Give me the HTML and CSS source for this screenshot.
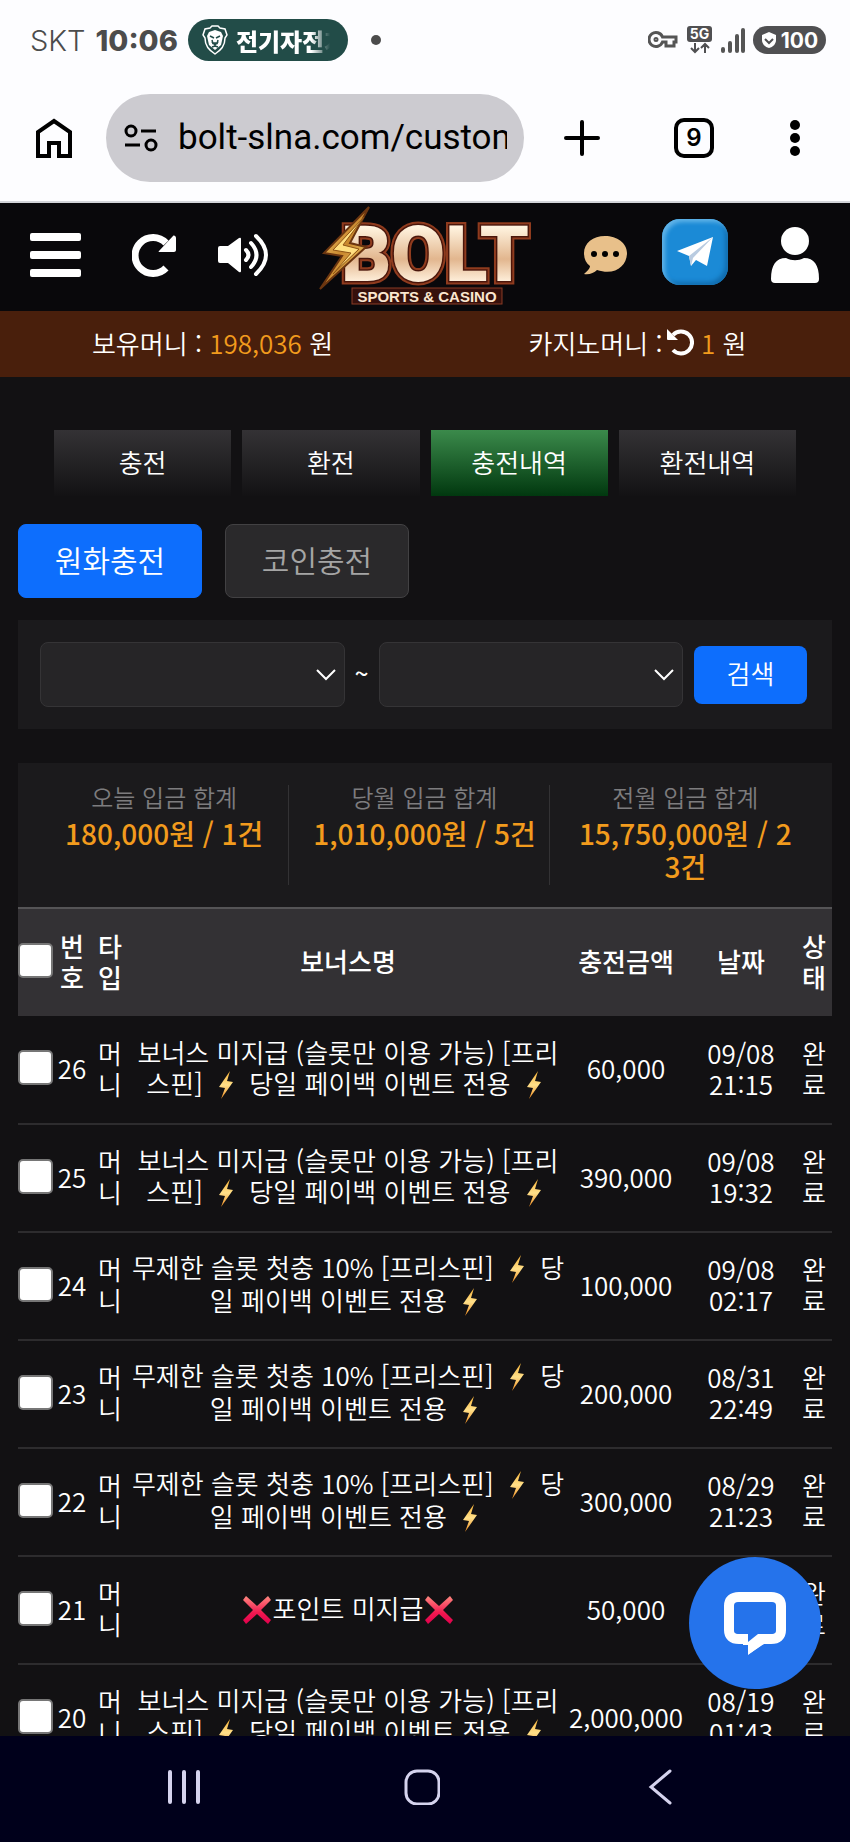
FILE: index.html
```
<!DOCTYPE html>
<html lang="ko">
<head>
  <meta charset="UTF-8" />
  <meta name="viewport" content="width=device-width, initial-scale=1.0"/>
  <title>BOLT - 충전내역</title>
  <link rel="stylesheet" href="styles.css">
</head>

<body>
  <!-- Shared icons -->
  <svg class="sprite" aria-hidden="true">
    <defs>
      <linearGradient id="bolt-fill" x1="0" y1="0" x2="0" y2="1">
        <stop offset="0" stop-color="#f9b233"/>
        <stop offset="0.5" stop-color="#ffe08a"/>
        <stop offset="1" stop-color="#f08a1c"/>
      </linearGradient>
      <linearGradient id="cross-fill" x1="0" y1="0" x2="0" y2="1">
        <stop offset="0" stop-color="#ff8a80"/>
        <stop offset="0.6" stop-color="#f0184f"/>
        <stop offset="1" stop-color="#e0004d"/>
      </linearGradient>
    </defs>
    <symbol id="icon-bolt" viewBox="0 0 32 30">
      <path d="M20 1 9 17l6 1-4 11 12-17-6-1z" fill="url(#bolt-fill)"/>
    </symbol>
    <symbol id="icon-cross" viewBox="0 0 32 30">
      <path d="M5 1 16 11 27 1 30 5 20 15 30 25 27 29 16 19 5 29 2 25 12 15 2 5z" fill="url(#cross-fill)"/>
    </symbol>
    <symbol id="icon-chevron" viewBox="0 0 20 12">
      <path d="M1 1l9 9 9-9" fill="none" stroke="#fff" stroke-width="2"/>
    </symbol>
  </svg>

  <div class="phone">
    <!-- Status bar -->
    <div class="status-bar">
      <span class="carrier">SKT</span>
      <span class="time">10:06</span>
      <div class="notice">
        <svg width="26" height="30" viewBox="0 0 26 30" fill="none" stroke="#fff" stroke-width="2">
          <path d="M8 3 10 1h6l2 2 5 1 2 6-2 3c0 8-4 12-10 16C7 25 3 21 3 13l-2-3 2-6z" stroke-width="1.500"/>
          <path d="M7 7 13 5l6 2 2 4-2 9-6 5-6-5-2-9z" fill="#fff" stroke="none"/>
          <path d="M8 11l4 2M18 11l-4 2M10 15l1 4M16 15l-1 4M11 18h4l-2 2zM10 22l3-1 3 1" stroke="#224c48" stroke-width="1.500"/>
        </svg>
        <span class="notice-text">전기자전거</span>
      </div>
      <span class="dot"></span>
      <div class="status-icons">
        <svg width="30" height="20" viewBox="0 0 30 20" fill="none" stroke="#555" stroke-width="3">
          <path d="M14.500 7A7 7 0 1 0 14.500 12H18V16H26V12H28V7z"/>
          <circle cx="8" cy="9.500" r="1.500" stroke-width="2"/>
        </svg>
        <svg class="net" width="26" height="28" viewBox="0 0 26 28">
          <rect width="25" height="16" rx="3" fill="#505052"/>
          <text x="12.500" y="13" text-anchor="middle" class="net-text">5G</text>
          <path d="M8 17v9M4 22l4 4 4-4M18 27v-8M14 22l4-4 4 4" fill="none" stroke="#505052" stroke-width="2"/>
        </svg>
        <svg width="26" height="27" viewBox="0 0 26 27" stroke="#555" stroke-width="4" stroke-linecap="round">
          <path d="M3 22v2M10 16v8M17 9v15M23 3v21" />
        </svg>
        <div class="battery">
          <svg width="16" height="18" viewBox="0 0 16 18">
            <path d="M8 1l7 3v5c0 4-3 7-7 8-4-1-7-4-7-8V4z" fill="#fff"/>
            <path d="M4 8l4 4 4-4" fill="none" stroke="#505052" stroke-width="2"/>
          </svg>
          <span>100</span>
        </div>
      </div>
    </div>

    <!-- Browser toolbar -->
    <div class="toolbar">
      <button class="icon-btn" aria-label="홈">
        <svg width="36" height="40" viewBox="0 0 36 40" fill="none" stroke="#000" stroke-width="4">
          <path d="M2 38V14L18 3l16 11v24H23V25H13v13z"/>
        </svg>
      </button>
      <div class="address">
        <svg width="34" height="28" viewBox="0 0 34 28" fill="none" stroke="#000" stroke-width="3">
          <circle cx="7" cy="7" r="5"/>
          <path d="M17 7h15M1 21h15"/>
          <circle cx="27" cy="21" r="5"/>
        </svg>
        <input class="url" type="text" value="bolt-slna.com/customer" aria-label="주소">
      </div>
      <div class="toolbar-actions">
        <button class="icon-btn" aria-label="새 탭">
          <svg width="36" height="36" viewBox="0 0 36 36" stroke="#000" stroke-width="4" stroke-linecap="round">
            <path d="M18 2v32M2 18h32"/>
          </svg>
        </button>
        <button class="tab-count">9</button>
        <button class="icon-btn" aria-label="메뉴">
          <svg width="14" height="38" viewBox="0 0 14 38">
            <circle cx="7" cy="6" r="5"/><circle cx="7" cy="19" r="5"/><circle cx="7" cy="32" r="5"/>
          </svg>
        </button>
      </div>
    </div>

    <!-- Site -->
    <div class="site">
      <header class="site-header">
        <div class="header-left">
          <button class="icon-btn" aria-label="전체 메뉴">
            <svg width="52" height="46" viewBox="0 0 52 46" fill="#fff">
              <rect y="1" width="51" height="8" rx="2"/><rect y="19" width="51" height="8" rx="2"/><rect y="37" width="51" height="8" rx="2"/>
            </svg>
          </button>
          <button class="icon-btn" aria-label="새로고침">
            <svg width="44" height="44" viewBox="0 0 44 44">
              <path d="M34 35A18 18 0 1 1 34 10" fill="none" stroke="#fff" stroke-width="7"/>
              <path d="M27 18 41 3c1-1 3 0 3 2v12c0 1-1 2-2 2H28c-1 0-2 0-1-1z" fill="#fff"/>
            </svg>
          </button>
          <button class="icon-btn" aria-label="소리">
            <svg width="52" height="44" viewBox="0 0 52 44">
              <path d="M2 13h8L21 5q2-1 2 1v32q0 2-2 1L10 30H2q-2 0-2-2V15q0-2 2-2z" fill="#fff"/>
              <path d="M28 17q5 5 0 10M33 10q11 12 0 24M38 3q20 19 0 38" fill="none" stroke="#fff" stroke-width="4" stroke-linecap="round"/>
            </svg>
          </button>
        </div>

        <a href="#" class="logo" aria-label="BOLT SPORTS &amp; CASINO">
          <svg width="212" height="100" viewBox="0 0 212 100">
            <defs>
              <linearGradient id="logo-text" x1="0" y1="0" x2="0" y2="1">
                <stop offset="0.200" stop-color="#fff3df"/>
                <stop offset="0.550" stop-color="#e2b68e"/>
                <stop offset="0.800" stop-color="#fff0dc"/>
              </linearGradient>
              <linearGradient id="logo-bolt" x1="0" y1="0" x2="1" y2="1">
                <stop offset="0" stop-color="#f9d47a"/>
                <stop offset="0.500" stop-color="#c9882e"/>
                <stop offset="1" stop-color="#ffe27d"/>
              </linearGradient>
            </defs>
            <text x="22" y="76" class="logo-word logo-edge">BOLT</text>
            <text x="22" y="76" class="logo-word logo-rim">BOLT</text>
            <text x="22" y="76" class="logo-word" fill="url(#logo-text)">BOLT</text>
            <path d="M50 2 5 48l18 3L1 84 47 42 31 38z" fill="url(#logo-bolt)" stroke="#6b3510" stroke-width="2"/>
            <path d="M45 12 14 45l18 3L14 69 40 44 24 40z" fill="#ffdf80" stroke="#8e5315" stroke-width="1"/>
            <rect x="33" y="83" width="150" height="16" fill="#36100c" stroke="#8a3a24"/>
            <text x="108" y="97" text-anchor="middle" class="logo-tag">SPORTS &amp; CASINO</text>
          </svg>
        </a>

        <div class="header-right">
          <button class="icon-btn" aria-label="문의">
            <svg width="45" height="40" viewBox="0 0 45 40">
              <path d="M22 1C10 1 1 8 1 18c0 6 2 10 6 13 0 3-3 5-6 8 5 1 10-1 13-4 18 6 30-4 30-17C44 8 34 1 22 1z" fill="#e8c08a"/>
              <circle cx="11" cy="19" r="3"/><circle cx="22" cy="19" r="3"/><circle cx="33" cy="19" r="3"/>
            </svg>
          </button>
          <a href="#" class="telegram" aria-label="텔레그램">
            <svg width="36" height="31" viewBox="0 0 36 31">
              <path d="M0 14 36 0 30 29 19 23 14 29 12 19z" fill="#fff"/>
              <path d="M12 19 36 0 16 21 14 29z" fill="#b9cbe0"/>
            </svg>
          </a>
          <button class="icon-btn user" aria-label="내 정보">
            <svg width="50" height="58" viewBox="0 0 50 58" fill="#fff">
              <circle cx="25" cy="15" r="14"/>
              <path d="M5 57q-4 0-4-4c0-14 5-21 15-21 6 3 12 3 18 0 10 0 15 7 15 21q0 4-4 4z"/>
            </svg>
          </button>
        </div>
      </header>

      <div class="balance">
        <p>보유머니 : <span class="money">198,036</span> 원</p>
        <p>카지노머니 :
          <svg width="28" height="28" viewBox="0 0 28 28" class="undo">
            <path d="M7 22A11 11 0 1 0 7 7" fill="none" stroke="#fff" stroke-width="4"/>
            <path d="M1 1v10q0 1 1 1h10z" fill="#fff"/>
          </svg>
          <span class="money">1</span> 원</p>
      </div>

      <nav class="tabs">
        <button class="tab">충전</button>
        <button class="tab">환전</button>
        <button class="tab active">충전내역</button>
        <button class="tab">환전내역</button>
      </nav>

      <main class="content">
        <div class="charge-type">
          <button class="type-btn active">원화충전</button>
          <button class="type-btn">코인충전</button>
        </div>

        <form class="search">
          <div class="select-wrap">
            <select aria-label="시작일"><option></option></select>
            <svg width="20" height="12"><use href="#icon-chevron"/></svg>
          </div>
          <span class="tilde">~</span>
          <div class="select-wrap">
            <select aria-label="종료일"><option></option></select>
            <svg width="20" height="12"><use href="#icon-chevron"/></svg>
          </div>
          <button type="button" class="search-btn">검색</button>
        </form>

        <div class="summary">
          <div class="sum">
            <p class="sum-label">오늘 입금 합계</p>
            <p class="sum-value">180,000원 / 1건</p>
          </div>
          <div class="sum">
            <p class="sum-label">당월 입금 합계</p>
            <p class="sum-value">1,010,000원 / 5건</p>
          </div>
          <div class="sum">
            <p class="sum-label">전월 입금 합계</p>
            <p class="sum-value">15,750,000원 / 23건</p>
          </div>
        </div>

        <table class="history">
          <thead>
            <tr>
              <th class="col-check"><input type="checkbox" aria-label="전체 선택"></th>
              <th class="col-no">번호</th>
              <th class="col-type">타입</th>
              <th>보너스명</th>
              <th class="col-amount">충전금액</th>
              <th class="col-date">날짜</th>
              <th class="col-state">상태</th>
            </tr>
          </thead>
          <tbody>
            <tr>
              <td><input type="checkbox" aria-label="26"></td>
              <td>26</td>
              <td class="narrow">머니</td>
              <td>보너스 미지급 (슬롯만 이용 가능) [프리스핀] <svg class="emoji"><use href="#icon-bolt"/></svg> 당일 페이백 이벤트 전용 <svg class="emoji"><use href="#icon-bolt"/></svg></td>
              <td>60,000</td>
              <td>09/08<br>21:15</td>
              <td class="narrow">완료</td>
            </tr>
            <tr>
              <td><input type="checkbox" aria-label="25"></td>
              <td>25</td>
              <td class="narrow">머니</td>
              <td>보너스 미지급 (슬롯만 이용 가능) [프리스핀] <svg class="emoji"><use href="#icon-bolt"/></svg> 당일 페이백 이벤트 전용 <svg class="emoji"><use href="#icon-bolt"/></svg></td>
              <td>390,000</td>
              <td>09/08<br>19:32</td>
              <td class="narrow">완료</td>
            </tr>
            <tr>
              <td><input type="checkbox" aria-label="24"></td>
              <td>24</td>
              <td class="narrow">머니</td>
              <td>무제한 슬롯 첫충 10% [프리스핀] <svg class="emoji"><use href="#icon-bolt"/></svg> 당일 페이백 이벤트 전용 <svg class="emoji"><use href="#icon-bolt"/></svg></td>
              <td>100,000</td>
              <td>09/08<br>02:17</td>
              <td class="narrow">완료</td>
            </tr>
            <tr>
              <td><input type="checkbox" aria-label="23"></td>
              <td>23</td>
              <td class="narrow">머니</td>
              <td>무제한 슬롯 첫충 10% [프리스핀] <svg class="emoji"><use href="#icon-bolt"/></svg> 당일 페이백 이벤트 전용 <svg class="emoji"><use href="#icon-bolt"/></svg></td>
              <td>200,000</td>
              <td>08/31<br>22:49</td>
              <td class="narrow">완료</td>
            </tr>
            <tr>
              <td><input type="checkbox" aria-label="22"></td>
              <td>22</td>
              <td class="narrow">머니</td>
              <td>무제한 슬롯 첫충 10% [프리스핀] <svg class="emoji"><use href="#icon-bolt"/></svg> 당일 페이백 이벤트 전용 <svg class="emoji"><use href="#icon-bolt"/></svg></td>
              <td>300,000</td>
              <td>08/29<br>21:23</td>
              <td class="narrow">완료</td>
            </tr>
            <tr>
              <td><input type="checkbox" aria-label="21"></td>
              <td>21</td>
              <td class="narrow">머니</td>
              <td><svg class="emoji"><use href="#icon-cross"/></svg>포인트 미지급<svg class="emoji"><use href="#icon-cross"/></svg></td>
              <td>50,000</td>
              <td></td>
              <td class="narrow">완료</td>
            </tr>
            <tr>
              <td><input type="checkbox" aria-label="20"></td>
              <td>20</td>
              <td class="narrow">머니</td>
              <td>보너스 미지급 (슬롯만 이용 가능) [프리스핀] <svg class="emoji"><use href="#icon-bolt"/></svg> 당일 페이백 이벤트 전용 <svg class="emoji"><use href="#icon-bolt"/></svg></td>
              <td>2,000,000</td>
              <td>08/19<br>01:43</td>
              <td class="narrow">완료</td>
            </tr>
          </tbody>
        </table>
      </main>

      <button class="chat-fab" aria-label="채팅 상담">
        <svg width="64" height="64" viewBox="0 0 64 64">
          <path d="M16 6h32q10 0 10 9v24q0 9-10 9H37L25 58V48h-9q-10 0-10-9V15q0-9 10-9z" fill="none" stroke="#fff" stroke-width="10"/>
          <path d="M25 43V64L41 53l-4-10z" fill="#fff"/>
          <path d="M0 54h25v10H0z" fill="#2573eb"/>
          <path d="M25 64 40 54h24v10z" fill="#2573eb"/>
          <path d="M17 11h30q6 0 6 6v20q0 6-6 6H35L25 51V43h-8q-6 0-6-6V17q0-6 6-6z" fill="#2573eb"/>
        </svg>
      </button>
    </div>

    <!-- System navigation -->
    <nav class="system-nav">
      <button class="icon-btn" aria-label="최근 앱">
        <svg width="36" height="36" viewBox="0 0 36 36" stroke="#d5d3ee" stroke-width="4" stroke-linecap="round">
          <path d="M4 3v30M18 3v30M32 3v30"/>
        </svg>
      </button>
      <button class="icon-btn" aria-label="홈 화면">
        <svg width="36" height="36" viewBox="0 0 36 36" fill="none" stroke="#d5d3ee" stroke-width="3">
          <rect x="2" y="2" width="33" height="33" rx="11"/>
        </svg>
      </button>
      <button class="icon-btn" aria-label="뒤로">
        <svg width="36" height="36" viewBox="0 0 36 36" fill="none" stroke="#d5d3ee" stroke-width="3" stroke-linecap="round">
          <path d="M28 2 9 18l19 16"/>
        </svg>
      </button>
    </nav>
  </div>
</body>
</html>
```

FILE: styles.css
```
:root {
  --bg: #121113;
  --panel: #1b1a1c;
  --blue: #0d6efd;
  --orange: #f29b1d;
}

* {
  box-sizing: border-box;
}

body {
  margin: 0;
  background: var(--bg);
  color: #fff;
  font-family: "Noto Sans CJK KR", sans-serif;
  font-size: 26px;
  font-weight: 350;
  line-height: 31px;
}

p {
  margin: 0;
}

button,
input,
select {
  font: inherit;
  color: inherit;
  margin: 0;
}

button {
  border: none;
  padding: 0;
  cursor: pointer;
}

svg {
  display: block;
}

.sprite {
  position: absolute;
  width: 0;
  height: 0;
}

.icon-btn {
  background: none;
}

.phone {
  height: 100vh;
  display: flex;
  flex-direction: column;
}

/* Status bar */
.status-bar {
  display: flex;
  flex: none;
  align-items: center;
  height: 80px;
  padding: 0 24px 0 30px;
  background: #fdfdff;
  color: #4c4c4c;
  font-family: Inter, sans-serif;
  font-size: 29px;
}

.carrier {
  font-weight: 300;
}

.time {
  margin: 0 10px;
  font-weight: 800;
}

.notice {
  display: flex;
  align-items: center;
  gap: 8px;
  width: 160px;
  height: 42px;
  padding: 0 18px 0 14px;
  border-radius: 21px;
  background: #224c48;
}

.notice svg {
  flex: none;
}

.notice-text {
  flex: 1;
  overflow: hidden;
  white-space: nowrap;
  color: #fff;
  font-family: "Noto Sans CJK KR", sans-serif;
  font-size: 24px;
  font-weight: 900;
  -webkit-mask-image: linear-gradient(90deg, #000 80%, transparent);
  mask-image: linear-gradient(90deg, #000 80%, transparent);
}

.dot {
  width: 10px;
  height: 10px;
  margin-left: 23px;
  border-radius: 50%;
  background: #4c4c4c;
}

.status-icons {
  display: flex;
  align-items: center;
  gap: 7px;
  margin-left: auto;
}

.net {
  margin-left: 2px;
}

.net-text {
  font: 700 14px Inter, sans-serif;
  fill: #fff;
}

.battery {
  display: flex;
  align-items: center;
  justify-content: center;
  gap: 4px;
  width: 73px;
  height: 28px;
  border-radius: 14px;
  background: #505052;
  color: #fff;
  font-size: 21px;
  font-weight: 700;
}

/* Browser toolbar */
.toolbar {
  display: flex;
  flex: none;
  align-items: center;
  height: 123px;
  padding: 14px 48px 20px 36px;
  background: #fdfdff;
  border-bottom: 2px solid #d3d5da;
}

.address {
  display: flex;
  flex: 1;
  align-items: center;
  gap: 20px;
  min-width: 0;
  height: 88px;
  margin: 0 40px 0 34px;
  padding: 0 17px 0 18px;
  border-radius: 44px;
  background: #cccbd0;
}

.address svg {
  flex: none;
}

.url {
  flex: 1;
  min-width: 0;
  height: 60px;
  padding: 0;
  border: none;
  outline: none;
  background: none;
  color: #000;
  font-family: Roboto, sans-serif;
  font-size: 35px;
  font-weight: 400;
}

.toolbar-actions {
  display: flex;
  align-items: center;
  gap: 74px;
}

.tab-count {
  width: 40px;
  height: 40px;
  border: 4px solid #000;
  border-radius: 10px;
  background: none;
  color: #000;
  font-family: Inter, sans-serif;
  font-size: 24px;
  font-weight: 600;
}

/* Site */
.site {
  position: relative;
  flex: 1;
  min-height: 0;
  overflow: hidden;
}

.site-header {
  display: grid;
  grid-template-columns: 1fr auto 1fr;
  align-items: center;
  height: 108px;
  padding: 0 30px 4px;
  background: #09080b;
}

.header-left,
.header-right {
  display: flex;
  align-items: center;
  gap: 46px;
}

.header-left {
  gap: 42px;
}

.header-left .icon-btn:first-child {
  margin-right: 8px;
}

.header-right {
  justify-content: flex-end;
  gap: 34px;
}

.header-right .user {
  margin-left: 8px;
}

.logo-word {
  font: 900 78px Roboto, sans-serif;
}

.logo-edge {
  fill: #6e2413;
  stroke: #8f3b1e;
  stroke-width: 7px;
}

.logo-rim {
  fill: none;
  stroke: #4a160b;
  stroke-width: 3px;
}

.logo-tag {
  font: 700 15px "Liberation Sans", sans-serif;
  fill: #fbe6d0;
}

.telegram {
  display: flex;
  align-items: center;
  justify-content: center;
  width: 66px;
  height: 66px;
  margin-bottom: 6px;
  border-radius: 18px;
  background: #1b8ad6;
  box-shadow: inset 3px 3px 4px #62b4e8, inset -3px -3px 4px #116cae;
}

.balance {
  display: grid;
  grid-template-columns: 1fr 1fr;
  align-items: center;
  height: 66px;
  padding-bottom: 4px;
  background: #491f0c;
  text-align: center;
}

.money {
  color: var(--orange);
}

.undo {
  display: inline-block;
  vertical-align: -2px;
  margin-left: -4px;
}

.tabs {
  display: grid;
  grid-template-columns: repeat(4, 1fr);
  gap: 11px;
  padding: 53px 54px 28px;
}

.tab {
  height: 66px;
  padding-bottom: 4px;
  background: linear-gradient(#343235, #131214);
}

.tab.active {
  background: linear-gradient(#3b8a4b, #01380f);
}

.content {
  padding: 0 18px;
}

.charge-type {
  display: flex;
  gap: 23px;
}

.type-btn {
  width: 184px;
  height: 74px;
  padding-bottom: 4px;
  border: 1px solid #424143;
  border-radius: 8px;
  background: #2a292b;
  color: #a5a5a5;
  font-size: 30px;
}

.type-btn.active {
  border-color: var(--blue);
  background: var(--blue);
  color: #fff;
}

.search {
  display: flex;
  align-items: center;
  margin-top: 22px;
  padding: 22px;
  background: var(--panel);
}

.select-wrap {
  position: relative;
  flex: 1;
}

.select-wrap select {
  display: block;
  width: 100%;
  height: 65px;
  border: 1px solid #353436;
  border-radius: 8px;
  background: #262527;
  appearance: none;
}

.select-wrap svg {
  position: absolute;
  top: 27px;
  right: 9px;
  pointer-events: none;
}

.tilde {
  width: 34px;
  padding-bottom: 4px;
  text-align: center;
  font-size: 24px;
  font-weight: 500;
}

.search-btn {
  width: 113px;
  height: 58px;
  margin: 0 3px 0 11px;
  padding-bottom: 4px;
  border-radius: 8px;
  background: var(--blue);
  color: #fff;
}

.summary {
  display: grid;
  grid-template-columns: repeat(3, 1fr);
  gap: 11px;
  margin-top: 34px;
  padding: 22px;
  background: var(--panel);
  text-align: center;
  word-break: break-all;
}

.sum {
  padding: 0 11px;
  border-right: 1px solid #333234;
}

.sum:last-child {
  border-right: none;
}

.sum-label {
  color: #7d7c7e;
  font-size: 24px;
  line-height: 24px;
  margin-bottom: 8px;
}

.sum-value {
  padding-bottom: 2px;
  color: var(--orange);
  font-size: 28px;
  font-weight: 500;
  line-height: 33px;
}

/* Charge history */
.history {
  width: 100%;
  table-layout: fixed;
  border-collapse: collapse;
  text-align: center;
  word-break: break-all;
}

.history th,
.history td {
  height: 108px;
  padding: 0 0 4px;
  border-bottom: 2px solid #2d2c2e;
}

.history th {
  border-top: 2px solid #555456;
  border-bottom: none;
  background: #333134;
  color: #fff;
  font-weight: 500;
}

.history .col-check,
.history .col-no,
.history .col-state {
  width: 36px;
}

.history .col-type {
  width: 40px;
}

.history .col-amount {
  width: 120px;
}

.history .col-date {
  width: 110px;
}

.history .col-no,
.history .col-type,
.history .col-state,
.history .narrow {
  padding: 0 5px 4px;
}

.history input {
  display: block;
  width: 35px;
  height: 35px;
  border: 2px solid #767676;
  border-radius: 5px;
  background: #fff;
  appearance: none;
}

.emoji {
  display: inline-block;
  width: 32px;
  height: 30px;
  vertical-align: -6px;
}

.chat-fab {
  position: absolute;
  right: 29px;
  bottom: 47px;
  display: flex;
  align-items: center;
  justify-content: center;
  width: 132px;
  height: 132px;
  border-radius: 50%;
  background: #2573eb;
}

/* System navigation */
.system-nav {
  display: flex;
  flex: none;
  align-items: center;
  justify-content: space-around;
  height: 106px;
  padding: 0 71px 4px 65px;
  background: #00001b;
}
```
